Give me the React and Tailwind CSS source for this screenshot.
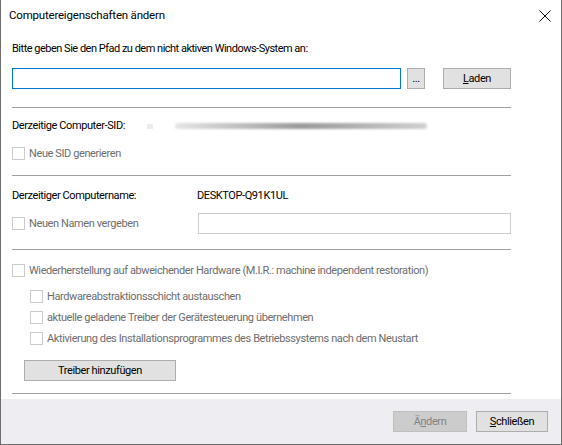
import React from "react";

const font = { fontFamily: 'Roboto, "Liberation Sans", sans-serif' };

function Box() {
  return <span className="inline-block w-[13px] h-[13px] shrink-0 border border-[#cccccc] bg-white" />;
}

function Check({ label, className = "" }) {
  return (
    <div className={`flex items-center gap-[4px] text-[#6d6d6d] whitespace-nowrap ${className}`}>
      <Box />
      <span className="leading-none">{label}</span>
    </div>
  );
}

function Button({ children, className = "", disabled = false }) {
  return (
    <button
      className={`h-[21px] border text-[11px] leading-none flex items-center justify-center ${
        disabled
          ? "bg-[#cccccc] border-[#bfbfbf] text-[#838383]"
          : "bg-[#e1e1e1] border-[#adadad] text-black"
      } ${className}`}
    >
      {children}
    </button>
  );
}

const Rule = ({ className = "" }) => <div className={`h-px bg-[#a0a0a0] ${className}`} />;

export default function App() {
  return (
    <div
      className="w-[562px] h-[445px] bg-white border-x border-b border-[#6e6e6e] flex flex-col text-[11px] tracking-[-0.4px] text-black select-none"
      style={font}
    >
      {/* title bar */}
      <div className="h-[31px] shrink-0 flex items-center justify-between pl-[8px] pr-[9px]">
        <span className="leading-none text-[11.5px] tracking-[-0.2px]">Computereigenschaften ändern</span>
        <svg width="12" height="12" viewBox="0 0 12 12" className="mr-[1px]">
          <path d="M0.5 0.5 L11.5 11.5 M11.5 0.5 L0.5 11.5" stroke="#111" strokeWidth="1" />
        </svg>
      </div>

      <div className="flex-1 pl-[11px] pr-[50px]">
        <div className="mt-[10px] h-[16px] flex items-center whitespace-nowrap tracking-[-0.5px]">
          Bitte geben Sie den Pfad zu dem nicht aktiven Windows-System an:
        </div>

        <div className="mt-[11px] h-[21px] flex items-stretch">
          <div className="w-[389px] border border-[#0078d7] bg-white" />
          <Button className="ml-[6px] w-[18px] !items-end pb-[4px]">...</Button>
          <Button className="ml-auto w-[68px]">
            <span className="underline">L</span>aden
          </Button>
        </div>

        <Rule className="mt-[18px]" />

        <div className="mt-[10px] h-[16px] flex items-center whitespace-nowrap">
          <span className="w-[135px]">Derzeitige Computer-SID:</span>
          <span className="w-[6px] h-[5px] bg-[#ececec] blur-[0.5px]" />
          <div className="ml-[22px] w-[252px] h-[6px] rounded-sm bg-gradient-to-r from-[#e6e6e6] via-[#9a9a9a] to-[#d0d0d0] blur-[1px]" />
        </div>

        <Check label="Neue SID generieren" className="mt-[12px] h-[14px]" />

        <Rule className="mt-[15px]" />

        <div className="mt-[12px] h-[16px] flex items-center whitespace-nowrap">
          <span className="w-[185px]">Derzeitiger Computername:</span>
          <span>DESKTOP-Q91K1UL</span>
        </div>

        <div className="mt-[9px] h-[21px] flex items-center">
          <Check label="Neuen Namen vergeben" className="w-[186px]" />
          <div className="flex-1 h-full border border-[#cccccc] bg-white" />
        </div>

        <Rule className="mt-[15px]" />

        <Check
          label="Wiederherstellung auf abweichender Hardware (M.I.R.: machine independent restoration)"
          className="mt-[13px] h-[14px]"
        />

        <div className="pl-[18px]">
          <Check label="Hardwareabstraktionsschicht austauschen" className="mt-[12px] h-[14px]" />
          <Check
            label="aktuelle geladene Treiber der Gerätesteuerung übernehmen"
            className="mt-[7px] h-[14px]"
          />
          <Check
            label="Aktivierung des Installationsprogrammes des Betriebssystems nach dem Neustart"
            className="mt-[7px] h-[14px]"
          />
        </div>

        <Button className="mt-[15px] ml-[12px] w-[152px]">Treiber hinzufügen</Button>

        <Rule className="mt-[12px]" />
      </div>

      {/* footer */}
      <div className="h-[45px] shrink-0 bg-[#eeedf2] flex items-start justify-end gap-[9px] pt-[12px] pr-[13px]">
        <Button disabled className="w-[74px] h-[20px]">
          Ä<span className="underline">n</span>dern
        </Button>
        <Button className="w-[72px] h-[20px]">
          <span className="underline">S</span>chließen
        </Button>
      </div>
    </div>
  );
}
